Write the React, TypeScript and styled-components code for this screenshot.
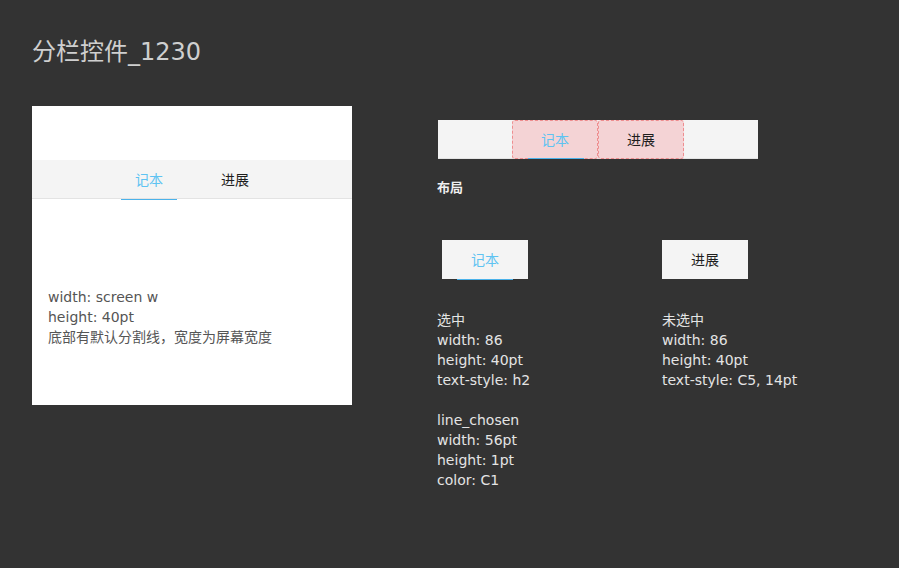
import { FC } from 'react'
import styled, { createGlobalStyle } from 'styled-components'

const GlobalStyle = createGlobalStyle({
  body: {
    margin: 0,
    background: '#333333',
    fontFamily: '"DejaVu Sans", "Noto Sans CJK SC", sans-serif',
  },
})

const blue = '#5ec3f2'
const lineBlue = '#4bb2ea'

const Page = styled('div')({
  width: 899,
  height: 568,
  boxSizing: 'border-box',
  padding: '37px 0 0 32px',
})

const Title = styled('h1')({
  margin: 0,
  fontSize: 24,
  fontWeight: 400,
  lineHeight: '30px',
  color: '#cfcfcf',
})

const Main = styled('div')({
  display: 'flex',
  marginTop: 39,
  gap: 85,
})

const Card = styled('div')({
  width: 320,
  height: 299,
  background: '#ffffff',
  paddingTop: 54,
  boxSizing: 'border-box',
})

const TabBar = styled('div')({
  width: 320,
  height: 39,
  boxSizing: 'border-box',
  background: '#f4f4f4',
  borderBottom: '1px solid #e3e3e3',
  display: 'flex',
  justifyContent: 'center',
})

const Tab = styled('div')<{ $active?: boolean; $marked?: boolean }>(({ $active, $marked }) => ({
  position: 'relative',
  width: 86,
  height: 39,
  boxSizing: 'border-box',
  display: 'flex',
  alignItems: 'center',
  justifyContent: 'center',
  paddingBottom: 1,
  fontFamily: '"Noto Sans CJK SC", sans-serif',
  fontSize: 14,
  color: $active ? blue : '#1e1e1e',
  background: $marked ? 'rgba(245, 170, 175, 0.45)' : 'transparent',
  border: $marked ? '1px dashed #ee8d8f' : 'none',
  borderRadius: $marked ? 3 : 0,
  '&::after': $active
    ? {
        content: '""',
        position: 'absolute',
        left: 15,
        bottom: -1,
        width: 56,
        height: 1,
        background: lineBlue,
      }
    : {},
}))

const CardNote = styled('div')({
  marginTop: 88,
  paddingLeft: 16,
  fontSize: 14,
  lineHeight: '20px',
  color: '#555555',
})

const Right = styled('div')({
  paddingTop: 14,
  marginLeft: 1,
  width: 400,
})

const Section = styled('div')({
  marginTop: 18,
  marginLeft: -1,
  fontSize: 13,
  fontWeight: 700,
  color: '#f0f0f0',
})

const Specs = styled('div')({
  display: 'grid',
  gridTemplateColumns: '225px 225px',
  marginTop: 44,
  marginLeft: -1,
})

const SpecBox = styled('div')<{ $inset: number }>(({ $inset }) => ({
  marginLeft: $inset,
  width: 86,
  height: 39,
  background: '#f4f4f4',
  display: 'flex',
}))

const SpecText = styled('div')({
  marginTop: 31,
  fontSize: 14,
  lineHeight: '20px',
  color: '#e4e4e4',
  whiteSpace: 'pre',
})

const App: FC = () => (
  <Page>
    <GlobalStyle />
    <Title>分栏控件_1230</Title>
    <Main>
      <Card>
        <TabBar>
          <Tab $active>记本</Tab>
          <Tab>进展</Tab>
        </TabBar>
        <CardNote>
          width: screen w
          <br />
          height: 40pt
          <br />
          底部有默认分割线，宽度为屏幕宽度
        </CardNote>
      </Card>
      <Right>
        <TabBar>
          <Tab $active $marked>记本</Tab>
          <Tab $marked>进展</Tab>
        </TabBar>
        <Section>布局</Section>
        <Specs>
          <div>
            <SpecBox $inset={5}>
              <Tab $active>记本</Tab>
            </SpecBox>
            <SpecText>{'选中\nwidth: 86\nheight: 40pt\ntext-style: h2\n\nline_chosen\nwidth: 56pt\nheight: 1pt\ncolor: C1'}</SpecText>
          </div>
          <div>
            <SpecBox $inset={0}>
              <Tab>进展</Tab>
            </SpecBox>
            <SpecText>{'未选中\nwidth: 86\nheight: 40pt\ntext-style: C5, 14pt'}</SpecText>
          </div>
        </Specs>
      </Right>
    </Main>
  </Page>
)

export default App
